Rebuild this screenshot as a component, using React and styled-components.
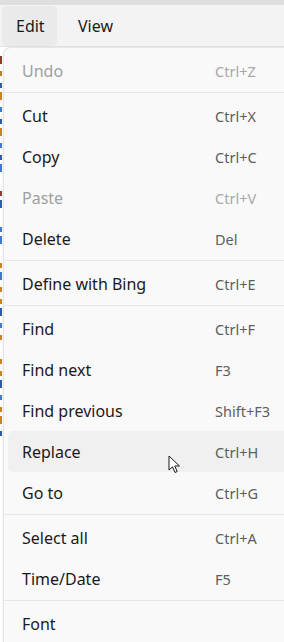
import React from 'react'
import styled, { createGlobalStyle } from 'styled-components'

const GlobalStyle = createGlobalStyle`
  html, body { margin: 0; padding: 0; background: #ffffff; }
  body { font-family: "Segoe UI", "Noto Sans", "Open Sans", sans-serif; overflow: hidden; }
`

const menuItems = [
  { label: 'Undo', keys: 'Ctrl+Z', disabled: true },
  { sep: true },
  { label: 'Cut', keys: 'Ctrl+X' },
  { label: 'Copy', keys: 'Ctrl+C' },
  { label: 'Paste', keys: 'Ctrl+V', disabled: true },
  { label: 'Delete', keys: 'Del' },
  { sep: true },
  { label: 'Define with Bing', keys: 'Ctrl+E' },
  { sep: true },
  { label: 'Find', keys: 'Ctrl+F' },
  { label: 'Find next', keys: 'F3' },
  { label: 'Find previous', keys: 'Shift+F3' },
  { label: 'Replace', keys: 'Ctrl+H', hover: true },
  { label: 'Go to', keys: 'Ctrl+G' },
  { sep: true },
  { label: 'Select all', keys: 'Ctrl+A' },
  { label: 'Time/Date', keys: 'F5' },
  { sep: true },
  { label: 'Font', keys: '' },
]

// glyph edges of the document peeking out on the left
const docMarks = [
  '#7a1b0c', '#b06a00', '#0b3f9e', '#c07000', '#2060c0', '#0b3f9e', '#c07000',
  '#2060c0', '#0b3f9e', '#2060c0', null, '#7a1b0c', '#0b3f9e', null, '#2060c0',
  '#2060c0', null, '#c07000', '#2060c0', '#c07000', '#c07000', '#0b3f9e',
  '#2060c0', '#c07000', null, '#c07000', '#c07000', '#0b3f9e', '#2060c0',
  '#c07000', '#c07000', '#0b3f9e',
]

function App() {
  return (
    <>
      <GlobalStyle />
      <Window>
        <TitleEdge />
        <MenuBar>
          <BarButton active>Edit</BarButton>
          <BarButton>View</BarButton>
        </MenuBar>
        <Workspace>
          <Document>
            {docMarks.map((color, i) => (
              <DocLine key={i}>
                {color && <Mark color={color} tall={i % 3 === 0} />}
              </DocLine>
            ))}
          </Document>
          <Dropdown>
            {menuItems.map((item, i) =>
              item.sep ? (
                <Separator key={i} />
              ) : (
                <Item key={i} hover={item.hover}>
                  <Label disabled={item.disabled}>{item.label}</Label>
                  <Keys disabled={item.disabled}>{item.keys}</Keys>
                </Item>
              )
            )}
          </Dropdown>
          <Pointer width="13" height="19" viewBox="0 0 13 19">
            <path d="M1 1 L1 15 L4.5 11.8 L7 17.5 L9.2 16.5 L6.8 11 L11.5 11 Z"
              fill="#ffffff" stroke="#1a1a1a" strokeWidth="1" strokeLinejoin="miter" />
          </Pointer>
        </Workspace>
      </Window>
    </>
  )
}

const Window = styled.div`
  width: 284px;
  height: 642px;
  display: flex;
  flex-direction: column;
  background: #ffffff;
  overflow: hidden;
`

const TitleEdge = styled.div`
  height: 5px;
  background: #dedede;
  flex-shrink: 0;
`

const MenuBar = styled.div`
  height: 40px;
  display: flex;
  align-items: stretch;
  padding: 1px 0 0 2px;
  background: #f3f3f3;
  border-bottom: 1px solid #e3e3e3;
  flex-shrink: 0;
`

const BarButton = styled.div`
  display: flex;
  align-items: center;
  padding: 0 14px;
  width: ${({ active }) => (active ? '55px' : 'auto')};
  box-sizing: border-box;
  margin-right: ${({ active }) => (active ? '7px' : '0')};
  border-radius: 5px;
  background: ${({ active }) => (active ? '#eaeaea' : 'transparent')};
  color: #1a1a1a;
  font-size: 16px;
`

const Workspace = styled.div`
  position: relative;
  flex: 1;
`

const Document = styled.div`
  display: flex;
  flex-direction: column;
  padding-top: 7px;
  width: 3px;
  overflow: hidden;
`

const DocLine = styled.div`
  height: 12px;
  display: flex;
  align-items: flex-end;
  padding-bottom: 2px;
  box-sizing: border-box;
`

const Mark = styled.span`
  display: block;
  width: 2px;
  height: ${({ tall }) => (tall ? '8px' : '5px')};
  background: ${({ color }) => color};
  opacity: 0.85;
`

const Dropdown = styled.div`
  position: absolute;
  left: 3px;
  top: 0;
  right: -12px;
  bottom: -12px;
  padding: 2px 0 0;
  background: #f9f9f9;
  border-top: 1px solid #e6e6e6;
  border-left: 1px solid #e6e6e6;
  border-top-left-radius: 8px;
  box-shadow: -1px 0 2px rgba(0, 0, 0, 0.05);
  display: flex;
  flex-direction: column;
`

const Item = styled.div`
  height: 41px;
  flex-shrink: 0;
  display: flex;
  align-items: center;
  margin: 0 0 0 4px;
  padding: 0 0 0 14px;
  border-radius: 5px;
  background: ${({ hover }) => (hover ? '#f0f0f0' : 'transparent')};
`

const Label = styled.span`
  width: 193px;
  font-size: 16px;
  color: ${({ disabled }) => (disabled ? '#a0a0a0' : '#1a1a1a')};
`

const Keys = styled.span`
  font-size: 14.5px;
  color: ${({ disabled }) => (disabled ? '#a8a8a8' : '#5e5e5e')};
`

const Separator = styled.div`
  height: 1px;
  flex-shrink: 0;
  margin: 1px 0 2px;
  background: #e6e6e6;
`

const Pointer = styled.svg`
  position: absolute;
  left: 168px;
  top: 408px;
`

export default App
